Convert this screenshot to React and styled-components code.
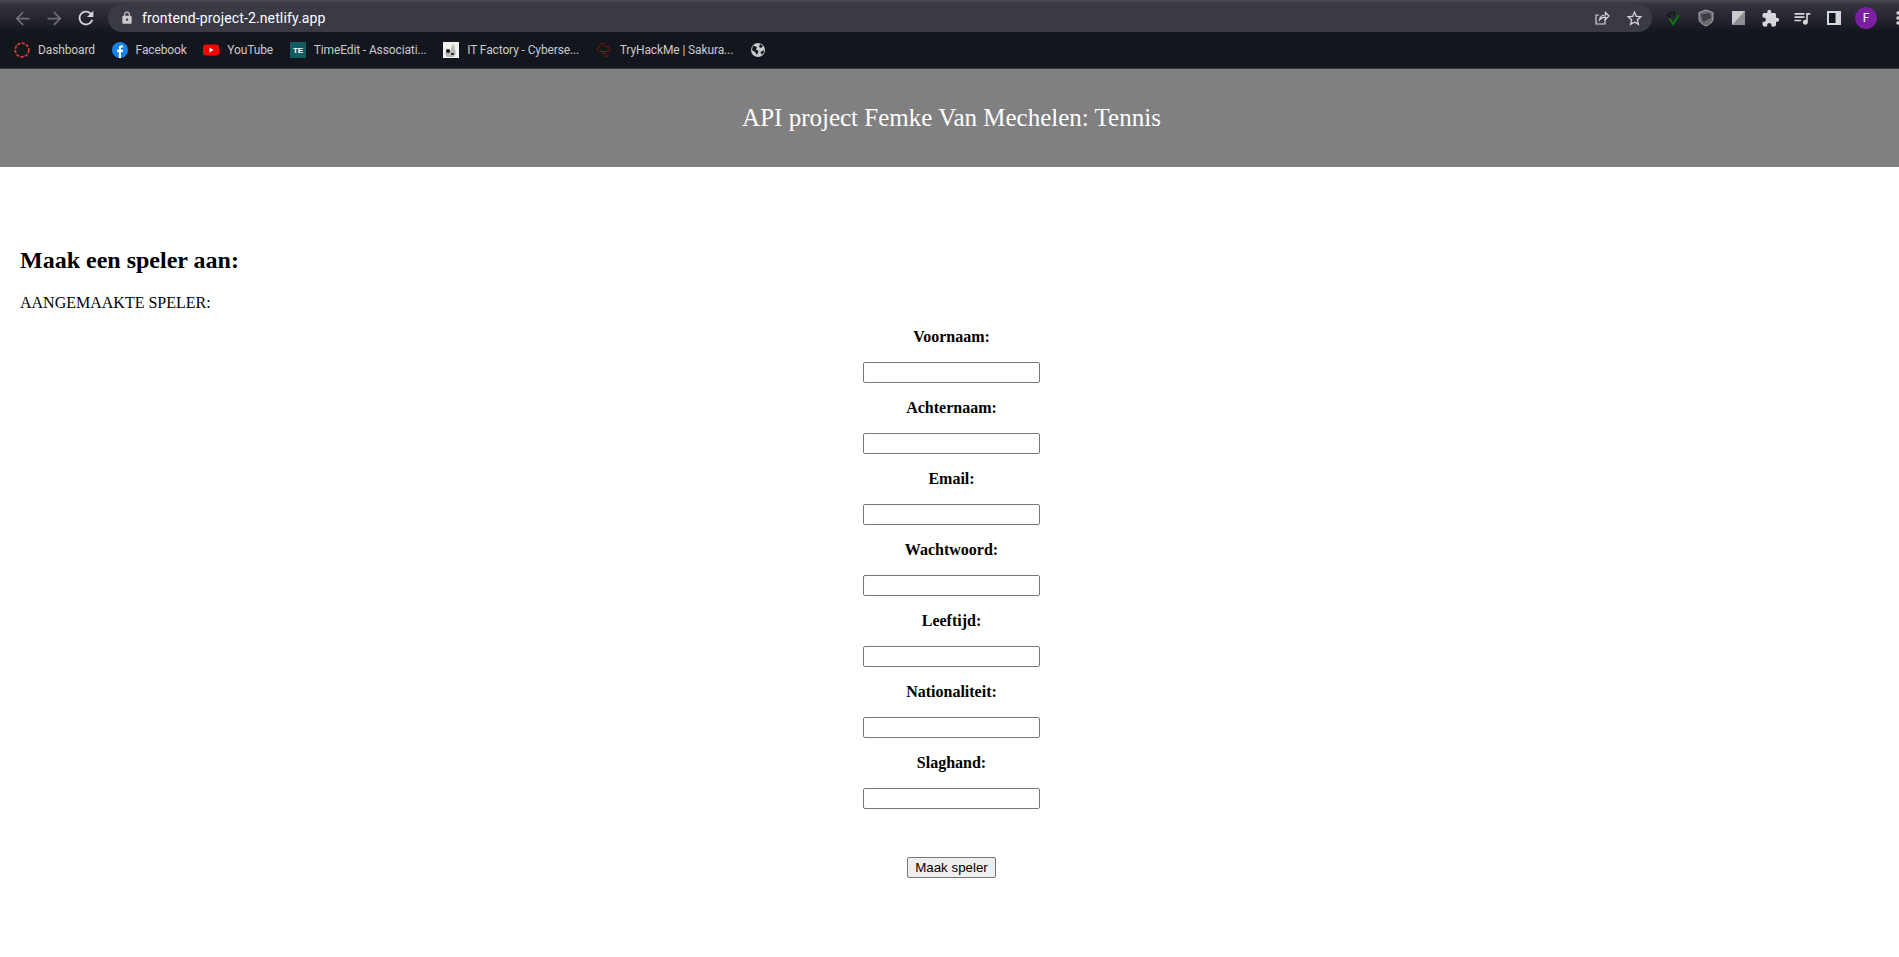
import React from "react";
import styled, { createGlobalStyle } from "styled-components";
import {
  MdArrowBack,
  MdArrowForward,
  MdRefresh,
  MdLock,
  MdStarBorder,
  MdExtension,
  MdQueueMusic,
  MdMoreVert
} from "react-icons/md";

const GlobalStyle = createGlobalStyle`
  html, body {
    margin: 0;
    background: #fff;
    color: #000;
    font-family: "Liberation Serif", "Times New Roman", serif;
    overflow-x: hidden;
  }
`;

const Browser = styled.div`
  height: 69px;
  display: flex;
  flex-direction: column;
  background: #14161e;
  border-bottom: 1px solid #3a3a42;
  box-sizing: border-box;
`;

const Toolbar = styled.div`
  height: 32px;
  flex: none;
  box-sizing: border-box;
  padding: 4px 0 0 6px;
  display: flex;
  align-items: center;
  overflow: hidden;
  background: linear-gradient(#4b4b53 0, #32323c 5px, #2a2a34 14px, #14161e 32px);
`;

const NavButton = styled.span`
  width: 32px;
  flex: none;
  display: flex;
  justify-content: center;
  color: ${p => (p.$dim ? "#6d6e74" : "#d6d7da")};
`;

const Omnibox = styled.div`
  margin-left: 6px;
  width: 1544px;
  height: 28px;
  flex: none;
  box-sizing: border-box;
  border-radius: 14px;
  background: #3a3a45;
  display: flex;
  align-items: center;
  padding: 0 2px 0 12px;
  color: #fff;
  font: 14px "Roboto", "Liberation Sans", sans-serif;
  letter-spacing: 0.13px;
`;

const Url = styled.span`
  margin-left: 8px;
  flex: 1;
`;

const Slot = styled.span`
  width: 32px;
  flex: none;
  display: flex;
  align-items: center;
  justify-content: center;
  color: #d6d7da;
`;

const Extensions = styled.div`
  display: flex;
  align-items: center;
  flex: none;
  margin-left: 6px;
`;

const Avatar = styled.span`
  width: 22px;
  height: 22px;
  border-radius: 50%;
  background: #7b1fa2;
  color: #fff;
  font: 12px "Roboto", sans-serif;
  display: flex;
  align-items: center;
  justify-content: center;
`;

const Bookmarks = styled.div`
  flex: 1;
  display: flex;
  align-items: center;
  padding-left: 14px;
  gap: 16.6px;
`;

const Bookmark = styled.div`
  display: flex;
  align-items: center;
  gap: 8px;
  color: #c8c9cc;
  font: 12px "Roboto", "Liberation Sans", sans-serif;
  letter-spacing: -0.12px;
  white-space: nowrap;
`;

const BookmarkIcon = styled.span`
  width: 16px;
  height: 16px;
  flex: none;
  display: flex;
  align-items: center;
  justify-content: center;
`;

const Banner = styled.header`
  height: 98px;
  padding-left: 4px;
  background: #808080;
  display: flex;
  align-items: center;
  justify-content: center;
`;

const BannerTitle = styled.h1`
  margin: 0;
  color: #fff;
  font-size: 25px;
  font-weight: normal;
`;

const Main = styled.main`
  padding: 80px 20px 0;
`;

const Heading = styled.h2`
  margin: 0 0 20px;
  font-size: 24px;
  line-height: 27px;
`;

const Created = styled.p`
  margin: 0;
  font-size: 16px;
  line-height: 18px;
`;

const PlayerForm = styled.form`
  display: flex;
  flex-direction: column;
  align-items: center;
  margin: 16px 0 0 4px;
`;

const FieldLabel = styled.label`
  font-weight: bold;
  font-size: 16px;
  line-height: 18px;
  margin-bottom: 16px;
`;

const FieldInput = styled.input`
  width: 177px;
  height: 21px;
  box-sizing: border-box;
  margin-bottom: 16px;
  border: 1px solid #767676;
  border-radius: 2px;
  padding: 1px 2px;
  background: #fff;
`;

const SubmitButton = styled.button`
  width: 89px;
  height: 21px;
  margin-top: 32px;
  box-sizing: border-box;
  padding: 0;
  border: 1px solid #767676;
  border-radius: 2px;
  background: #efefef;
  color: #000;
  font: 13.33px "Liberation Sans", Arial, sans-serif;
`;

const DashboardIcon = () => (
  <svg width="16" height="16" viewBox="0 0 16 16">
    <circle cx="8" cy="8" r="6.8" fill="none" stroke="#e03a2e" strokeWidth="1.7" strokeDasharray="3.2 1.3" />
  </svg>
);

const FacebookIcon = () => (
  <svg width="16" height="16" viewBox="0 0 16 16">
    <circle cx="8" cy="8" r="8" fill="#1783e8" />
    <path d="M6.8 16V10H5V7.7h1.8V6.2C6.8 4.3 7.9 3.3 9.6 3.3l1.5.1v2h-1c-.9 0-1.1.5-1.1 1.1v1.2h2.1L10.8 10H9v6z" fill="#fff" />
  </svg>
);

const YoutubeIcon = () => (
  <svg width="16" height="12" viewBox="0 0 16 12">
    <rect width="16" height="11" y="0.5" rx="3" fill="#f00" />
    <path d="M6.4 3.6 10.4 6l-4 2.4z" fill="#fff" />
  </svg>
);

const TimeEditIcon = () => (
  <svg width="16" height="16" viewBox="0 0 16 16">
    <rect width="16" height="16" fill="#0f5c63" />
    <text x="8" y="11" textAnchor="middle" fontSize="8" fontWeight="bold" fontFamily="Liberation Sans" fill="#fff">TE</text>
  </svg>
);

const RabbitIcon = () => (
  <svg width="16" height="16" viewBox="0 0 16 16">
    <rect width="16" height="16" fill="#f2f2f2" />
    <path d="M9 1l1 5 1-5 1 6 1 4-2 4H4l-2-3 2-3 4-1z" fill="#b9b9b9" />
    <circle cx="5" cy="9" r="2" fill="#111" />
    <rect x="8" y="11" width="3" height="2" fill="#333" />
  </svg>
);

const CloudIcon = () => (
  <svg width="17" height="16" viewBox="0 0 17 16" fill="none" stroke="#a01212" strokeWidth="1">
    <path d="M3.500 9.500C.8 9.500.2 6 3 5.500 3.400 2 6 .5 8 1.500c1.500.6 2 1.800 2.300 3 2.700-.8 5.200 1.100 4.200 3.600-.3.8-1 1.400-2 1.400z" />
    <path d="M6 11.500h5M9 14.500h4" />
  </svg>
);

const GlobeIcon = () => (
  <svg width="16" height="16" viewBox="0 0 16 16">
    <circle cx="8" cy="8" r="7" fill="#c9cacd" />
    <path d="M3 3.500 7 5 6 7.500 8.500 9 7 13 5 10 2 8zM10 2l3 2-2 2-2-1zM14 8l-.5 3.500-2 1L10.500 10z" fill="#14161e" />
  </svg>
);

const ShareIcon = () => (
  <svg width="16" height="16" viewBox="0 0 16 16" fill="none" stroke="currentColor" strokeWidth="1.2">
    <path d="M11 9v5H2V5h3" />
    <path d="M5.500 10c.4-3 2.500-5 6-5V2.500L15 6l-3.500 3.500V7.200C9 7.200 7 8 5.500 10z" />
  </svg>
);

const CheckIcon = () => (
  <svg width="16" height="16" viewBox="0 0 16 16" fill="none">
    <path d="M6 2 1.500 5 5 7M8 1v5" stroke="#101010" strokeWidth="1.2" />
    <path d="M3.500 8.500 7 14l6-9" stroke="#0f7a12" strokeWidth="2" />
  </svg>
);

const ShieldIcon = () => (
  <svg width="16" height="18" viewBox="0 0 16 18">
    <path d="M8 1 15 3.500V10c0 3-3.500 5.500-7 7-3.500-1.500-7-4-7-7V3.500z" fill="#6a6b70" stroke="#a8a9ac" />
    <path d="M3 5.500 12 4 13 9 5 13z" fill="#3d3e44" />
  </svg>
);

const GradientSquare = () => (
  <svg width="13" height="14" viewBox="0 0 13 14">
    <rect width="13" height="14" fill="#c9cacd" />
    <path d="M13 0v14H0z" fill="#8c8d90" />
  </svg>
);

const SidePanelIcon = () => (
  <svg width="14" height="14" viewBox="0 0 14 14">
    <rect width="14" height="14" fill="#d6d7da" />
    <rect x="2" y="2" width="6.500" height="10" fill="#14161e" />
  </svg>
);

const bookmarks = [
  { label: "Dashboard", icon: <DashboardIcon /> },
  { label: "Facebook", icon: <FacebookIcon /> },
  { label: "YouTube", icon: <YoutubeIcon /> },
  { label: "TimeEdit - Associati...", icon: <TimeEditIcon /> },
  { label: "IT Factory - Cyberse...", icon: <RabbitIcon /> },
  { label: "TryHackMe | Sakura...", icon: <CloudIcon /> }
];

const fields = ["Voornaam", "Achternaam", "Email", "Wachtwoord", "Leeftijd", "Nationaliteit", "Slaghand"];

const App = () => (
  <>
    <GlobalStyle />
    <Browser>
      <Toolbar>
        <NavButton $dim><MdArrowBack size={21} /></NavButton>
        <NavButton $dim><MdArrowForward size={21} /></NavButton>
        <NavButton><MdRefresh size={22} /></NavButton>
        <Omnibox>
          <MdLock size={14} color="#c9cacd" />
          <Url>frontend-project-2.netlify.app</Url>
          <Slot><ShareIcon /></Slot>
          <Slot><MdStarBorder size={19} /></Slot>
        </Omnibox>
        <Extensions>
          <Slot><CheckIcon /></Slot>
          <Slot><ShieldIcon /></Slot>
          <Slot><GradientSquare /></Slot>
          <Slot><MdExtension size={19} /></Slot>
          <Slot><MdQueueMusic size={20} /></Slot>
          <Slot><SidePanelIcon /></Slot>
          <Slot><Avatar>F</Avatar></Slot>
          <Slot><MdMoreVert size={20} /></Slot>
        </Extensions>
      </Toolbar>
      <Bookmarks>
        {bookmarks.map(b => (
          <Bookmark key={b.label}>
            <BookmarkIcon>{b.icon}</BookmarkIcon>
            {b.label}
          </Bookmark>
        ))}
        <GlobeIcon />
      </Bookmarks>
    </Browser>
    <Banner>
      <BannerTitle>API project Femke Van Mechelen: Tennis</BannerTitle>
    </Banner>
    <Main>
      <Heading>Maak een speler aan:</Heading>
      <Created>AANGEMAAKTE SPELER:</Created>
      <PlayerForm onSubmit={e => e.preventDefault()}>
        {fields.map(name => (
          <React.Fragment key={name}>
            <FieldLabel htmlFor={name}>{name}:</FieldLabel>
            <FieldInput id={name} type="text" />
          </React.Fragment>
        ))}
        <SubmitButton type="submit">Maak speler</SubmitButton>
      </PlayerForm>
    </Main>
  </>
);

export default App;
